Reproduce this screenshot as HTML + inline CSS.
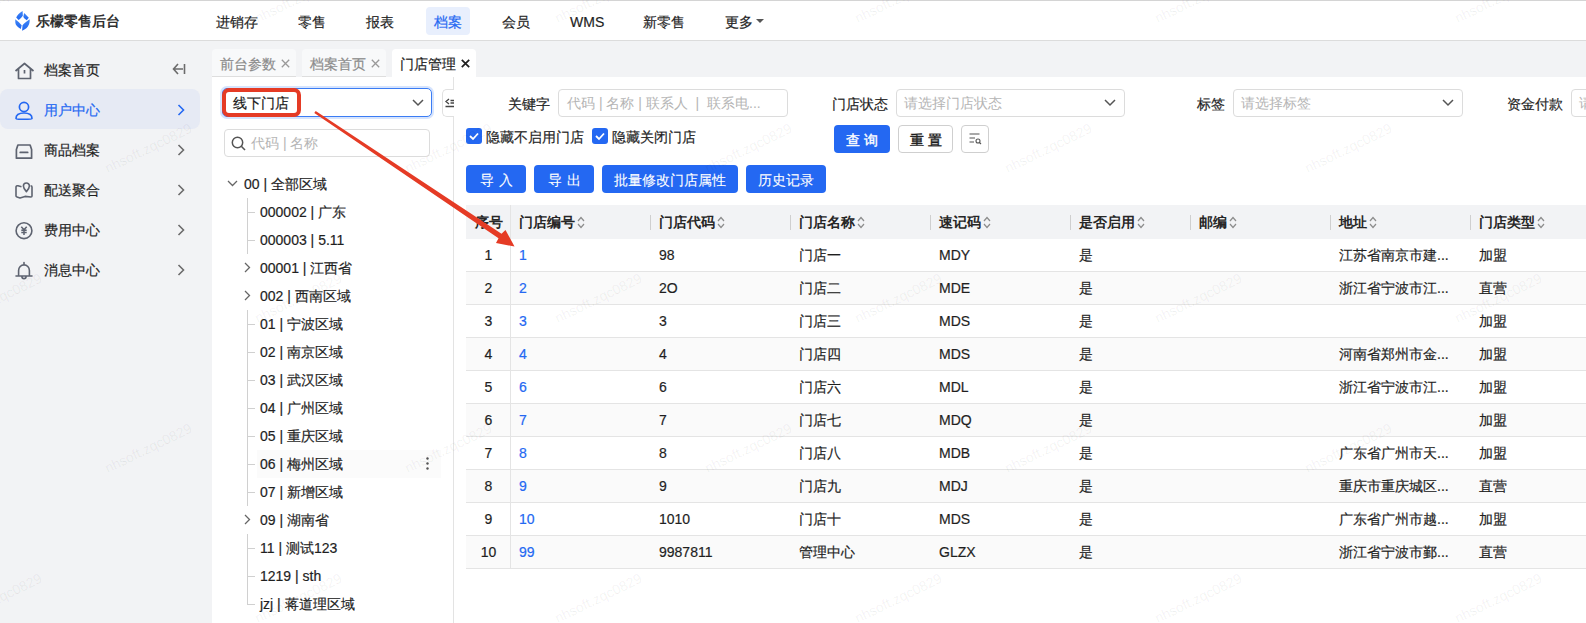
<!DOCTYPE html><html><head><meta charset="utf-8"><style>
*{margin:0;padding:0;box-sizing:border-box}
html,body{width:1586px;height:623px;overflow:hidden;background:#fff}
body{font-family:"Liberation Sans",sans-serif;font-size:14px;color:#1f1f1f;position:relative}
.t{-webkit-text-stroke:0.2px currentColor}
div,span{position:absolute;white-space:nowrap}
svg{position:absolute;overflow:visible}
.t{line-height:20px;font-size:14px}
.nav{top:12px;color:#1f1f1f}
.si{left:44px;color:#1f1f1f}
.tab{top:49px;height:28px;color:#8c8c8c;background:#f8f9fa;border-radius:4px 4px 0 0;border-bottom:1px solid #dedede}
.tab span{top:4px;left:8px}
.inp{border:1px solid #dcdcdc;border-radius:4px;height:28px;background:#fff}
.ph{color:#b5b5b5;-webkit-text-stroke:0 !important}
.btn{height:28px;line-height:30px;border-radius:4px;background:#2468f2;color:#fff;text-align:center;font-size:14px;-webkit-text-stroke:0.1px currentColor}
.th{top:205px;height:34px;background:#f2f3f5}
.tht{top:212px;font-weight:bold;color:#262626;-webkit-text-stroke:0 !important}
.sep{top:215px;width:1px;height:15px;background:#cfcfcf}
.row{left:466px;width:1120px;height:33px;border-bottom:1px solid #e4e4e4}
.lk{color:#2468f2}
</style></head><body>
<div style="left:0;top:0;width:1586px;height:41px;background:#fff;border-bottom:1px solid #dcdcdc"></div>
<div style="left:0;top:0;width:1586px;height:1px;background:#d4d4d4"></div>
<svg style="left:15px;top:11px" width="16" height="20" viewBox="0 0 16 20">
<defs><linearGradient id="lg" x1="0" y1="0" x2="0" y2="1"><stop offset="0" stop-color="#3f86f7"/><stop offset="1" stop-color="#1f66f0"/></linearGradient></defs>
<path d="M7.6 0 C4.5 2 2.2 4 1.2 6.5 L3.6 9 C5.5 7.5 7 6.2 7.8 4.5 Z" fill="url(#lg)"/>
<path d="M9.2 2.1 L13.8 6.7 L11.7 9.2 C10 8 8.6 7 8.3 5.8 Z" fill="url(#lg)"/>
<path d="M0.2 8.3 C2.5 10 4.8 12 6.7 14.2 L5.8 18 C2.5 16 0.5 14 0.4 12.1 Z" fill="url(#lg)"/>
<path d="M14.6 8.3 C12 10.5 9 12.2 7.5 14.2 L7.1 19.8 C10.5 18 13 16.5 13.4 14.6 C14.6 12.5 14.8 10 14.6 8.3 Z" fill="url(#lg)"/>
</svg>
<div class="t" style="left:36px;top:11px;font-weight:bold;color:#303030;font-size:14px;-webkit-text-stroke:0">乐檬零售后台</div>
<div style="left:426px;top:7px;width:44px;height:28px;border-radius:4px;background:#e8effd"></div>
<div class="t nav" style="left:216px;color:#1f1f1f">进销存</div>
<div class="t nav" style="left:298px;color:#1f1f1f">零售</div>
<div class="t nav" style="left:366px;color:#1f1f1f">报表</div>
<div class="t nav" style="left:434px;color:#2468f2">档案</div>
<div class="t nav" style="left:502px;color:#1f1f1f">会员</div>
<div class="t nav" style="left:570px;color:#1f1f1f">WMS</div>
<div class="t nav" style="left:643px;color:#1f1f1f">新零售</div>
<div class="t nav" style="left:725px;color:#1f1f1f">更多</div>
<svg style="left:756px;top:19px" width="8" height="4"><path d="M0 0 L8 0 L4 4 Z" fill="#555"/></svg>
<div style="left:0;top:41px;width:212px;height:582px;background:#f2f3f5"></div>
<div style="left:0;top:89px;width:200px;height:40px;background:#e6eaf4;border-radius:8px"></div>
<div class="t si" style="top:60px;color:#1f1f1f">档案首页</div>
<div class="t si" style="top:100px;color:#2468f2">用户中心</div>
<svg style="left:177px;top:104px" width="8" height="12"><path d="M1.5 1 L6.5 6 L1.5 11" fill="none" stroke="#2468f2" stroke-width="1.6"/></svg>
<div class="t si" style="top:140px;color:#1f1f1f">商品档案</div>
<svg style="left:177px;top:144px" width="8" height="12"><path d="M1.5 1 L6.5 6 L1.5 11" fill="none" stroke="#6b6b6b" stroke-width="1.6"/></svg>
<div class="t si" style="top:180px;color:#1f1f1f">配送聚合</div>
<svg style="left:177px;top:184px" width="8" height="12"><path d="M1.5 1 L6.5 6 L1.5 11" fill="none" stroke="#6b6b6b" stroke-width="1.6"/></svg>
<div class="t si" style="top:220px;color:#1f1f1f">费用中心</div>
<svg style="left:177px;top:224px" width="8" height="12"><path d="M1.5 1 L6.5 6 L1.5 11" fill="none" stroke="#6b6b6b" stroke-width="1.6"/></svg>
<div class="t si" style="top:260px;color:#1f1f1f">消息中心</div>
<svg style="left:177px;top:264px" width="8" height="12"><path d="M1.5 1 L6.5 6 L1.5 11" fill="none" stroke="#6b6b6b" stroke-width="1.6"/></svg>
<svg style="left:172px;top:63px" width="14" height="12"><path d="M6 1 L1.5 6 L6 11 M1.5 6 L11 6 M12.5 1 L12.5 11" fill="none" stroke="#6b6b6b" stroke-width="1.6"/></svg>
<svg style="left:14px;top:62px" width="21" height="18"><path d="M1.5 9 L10.5 1.5 L19.5 9 M4.5 7 L4.5 16.5 L16.5 16.5 L16.5 7 M10.5 8 L10.5 11.5" fill="none" stroke="#5e6370" stroke-width="1.7" stroke-linejoin="round"/></svg>
<svg style="left:14px;top:101px" width="20" height="19"><circle cx="10" cy="6" r="4.6" fill="none" stroke="#2468f2" stroke-width="1.7"/><path d="M2 17.5 C2 13 6 12 10 12 C14 12 18 13 18 17.5 C18 18.5 2 18.5 2 17.5 Z" fill="none" stroke="#2468f2" stroke-width="1.7"/></svg>
<svg style="left:15px;top:143px" width="18" height="17"><path d="M1.4 15.2 L1.4 6.5 L2.9 2 L15.1 2 L16.6 6.5 L16.6 15.2 Z M5.2 9.4 L12.7 9.4" fill="none" stroke="#5e6370" stroke-width="1.7" stroke-linejoin="round" stroke-linecap="round"/></svg>
<svg style="left:15px;top:181px" width="19" height="19"><path d="M6.5 5.7 L3 4.8 C1.8 4.6 1 5 1 6 L1 15 C1 15.5 1.3 15.8 2 16 L5 16.9 L10 15.4 L16 16 C16.6 16 17 15.6 17 15 L17 6 C17 5.2 16.6 4.9 15.6 4.8" fill="none" stroke="#5e6370" stroke-width="1.6" stroke-linejoin="round"/><path d="M11.4 10.6 C9.6 8.6 8.4 7.2 8.4 5 A3 3 0 0 1 14.4 5 C14.4 7.2 13.2 8.6 11.4 10.6 Z" fill="none" stroke="#5e6370" stroke-width="1.6" stroke-linejoin="round"/></svg>
<svg style="left:15px;top:221px" width="18" height="19"><circle cx="9" cy="9.7" r="7.9" fill="none" stroke="#5e6370" stroke-width="1.6"/><path d="M6.3 5.8 L9 8.8 L11.7 5.8 M9 8.8 L9 14 M6.3 9.3 L11.7 9.3 M6.3 11.4 L11.7 11.4" fill="none" stroke="#5e6370" stroke-width="1.5"/></svg>
<svg style="left:15px;top:261px" width="19" height="20"><path d="M3.6 15 L3.6 9.5 A5.4 5.6 0 0 1 14.4 9.5 L14.4 15 M1 15 L17 15 M6.9 15.5 A2.1 2.1 0 0 0 11.1 15.5 M9 1.5 L9 3.8" fill="none" stroke="#5e6370" stroke-width="1.6" stroke-linejoin="round" stroke-linecap="round"/></svg>
<div style="left:212px;top:41px;width:1374px;height:36px;background:#f2f3f5"></div>
<div style="left:212px;top:77px;width:1374px;height:546px;background:#fff"></div>
<div class="tab" style="left:212px;width:84px"><span class="t" style="top:5px">前台参数</span></div>
<svg style="left:281px;top:59px" width="9" height="9"><path d="M0.8 0.8 L8.2 8.2 M8.2 0.8 L0.8 8.2" stroke="#999" stroke-width="1.3"/></svg>
<div class="tab" style="left:302px;width:84px"><span class="t" style="top:5px">档案首页</span></div>
<svg style="left:371px;top:59px" width="9" height="9"><path d="M0.8 0.8 L8.2 8.2 M8.2 0.8 L0.8 8.2" stroke="#999" stroke-width="1.3"/></svg>
<div style="left:392px;top:49px;width:84px;height:28px;background:#fff;border-radius:4px 4px 0 0"><span class="t" style="left:8px;top:5px;color:#1f1f1f">门店管理</span></div>
<svg style="left:461px;top:59px" width="9" height="9"><path d="M0.8 0.8 L8.2 8.2 M8.2 0.8 L0.8 8.2" stroke="#1f1f1f" stroke-width="1.7"/></svg>
<div style="left:453px;top:77px;width:1px;height:546px;background:#e3e3e3"></div>
<div style="left:222px;top:88px;width:210px;height:29px;border:1px solid #3b7cf4;border-radius:5px;box-shadow:0 0 0 2px #d6e4fd;background:#fff"></div>
<svg style="left:412px;top:99px" width="12" height="7"><path d="M1 1 L6 6 L11 1" fill="none" stroke="#555" stroke-width="1.5"/></svg>
<div class="t" style="left:233px;top:93px;color:#1a1a1a">线下门店</div>
<div style="left:222px;top:88px;width:79px;height:29px;border:4px solid #e53b25;border-radius:7px"></div>
<div style="left:442px;top:89px;width:12px;height:28px;border:1px solid #e0e0e0;border-right:none;border-radius:5px 0 0 5px;background:#fff"></div>
<svg style="left:445px;top:98px" width="9" height="10"><path d="M4 1 L1 3.5 L4 6 M5.5 2.5 L9 2.5 M5.5 5 L9 5 M0.5 8.5 L9 8.5" fill="none" stroke="#444" stroke-width="1.3"/></svg>
<div class="inp" style="left:224px;top:129px;width:206px;height:28px"></div>
<svg style="left:231px;top:136px" width="15" height="15"><circle cx="6.5" cy="6.5" r="5.2" fill="none" stroke="#555" stroke-width="1.5"/><path d="M10.3 10.3 L14 14" stroke="#555" stroke-width="1.6"/></svg>
<div class="t ph" style="left:251px;top:133px">代码 | 名称</div>
<div style="left:257px;top:450px;width:184px;height:28px;background:#fbfbfb"></div>
<div class="t" style="left:244px;top:174px;color:#1f1f1f">00 | 全部区域</div>
<svg style="left:227px;top:180px" width="11" height="7"><path d="M1 1 L5.5 5.5 L10 1" fill="none" stroke="#666" stroke-width="1.3"/></svg>
<div class="t" style="left:260px;top:202px;color:#1f1f1f">000002 | 广东</div>
<div style="left:247px;top:212px;width:8px;height:1px;background:#d0d0d0"></div>
<div class="t" style="left:260px;top:230px;color:#1f1f1f">000003 | 5.11</div>
<div style="left:247px;top:240px;width:8px;height:1px;background:#d0d0d0"></div>
<div class="t" style="left:260px;top:258px;color:#1f1f1f">00001 | 江西省</div>
<svg style="left:244px;top:262px" width="7" height="11"><path d="M1 1 L5.5 5.5 L1 10" fill="none" stroke="#666" stroke-width="1.3"/></svg>
<div class="t" style="left:260px;top:286px;color:#1f1f1f">002 | 西南区域</div>
<svg style="left:244px;top:290px" width="7" height="11"><path d="M1 1 L5.5 5.5 L1 10" fill="none" stroke="#666" stroke-width="1.3"/></svg>
<div class="t" style="left:260px;top:314px;color:#1f1f1f">01 | 宁波区域</div>
<div style="left:247px;top:324px;width:8px;height:1px;background:#d0d0d0"></div>
<div class="t" style="left:260px;top:342px;color:#1f1f1f">02 | 南京区域</div>
<div style="left:247px;top:352px;width:8px;height:1px;background:#d0d0d0"></div>
<div class="t" style="left:260px;top:370px;color:#1f1f1f">03 | 武汉区域</div>
<div style="left:247px;top:380px;width:8px;height:1px;background:#d0d0d0"></div>
<div class="t" style="left:260px;top:398px;color:#1f1f1f">04 | 广州区域</div>
<div style="left:247px;top:408px;width:8px;height:1px;background:#d0d0d0"></div>
<div class="t" style="left:260px;top:426px;color:#1f1f1f">05 | 重庆区域</div>
<div style="left:247px;top:436px;width:8px;height:1px;background:#d0d0d0"></div>
<div class="t" style="left:260px;top:454px;color:#1f1f1f">06 | 梅州区域</div>
<div style="left:247px;top:464px;width:8px;height:1px;background:#d0d0d0"></div>
<div class="t" style="left:260px;top:482px;color:#1f1f1f">07 | 新增区域</div>
<div style="left:247px;top:492px;width:8px;height:1px;background:#d0d0d0"></div>
<div class="t" style="left:260px;top:510px;color:#1f1f1f">09 | 湖南省</div>
<svg style="left:244px;top:514px" width="7" height="11"><path d="M1 1 L5.5 5.5 L1 10" fill="none" stroke="#666" stroke-width="1.3"/></svg>
<div class="t" style="left:260px;top:538px;color:#1f1f1f">11 | 测试123</div>
<div style="left:247px;top:548px;width:8px;height:1px;background:#d0d0d0"></div>
<div class="t" style="left:260px;top:566px;color:#1f1f1f">1219 | sth</div>
<div style="left:247px;top:576px;width:8px;height:1px;background:#d0d0d0"></div>
<div class="t" style="left:260px;top:594px;color:#1f1f1f">jzj | 蒋道理区域</div>
<div style="left:247px;top:604px;width:8px;height:1px;background:#d0d0d0"></div>
<div style="left:247px;top:198px;width:1px;height:56px;background:#d0d0d0"></div>
<div style="left:247px;top:310px;width:1px;height:196px;background:#d0d0d0"></div>
<div style="left:247px;top:534px;width:1px;height:70px;background:#d0d0d0"></div>
<svg style="left:426px;top:457px" width="3" height="13"><circle cx="1.5" cy="1.5" r="1.2" fill="#555"/><circle cx="1.5" cy="6.5" r="1.2" fill="#555"/><circle cx="1.5" cy="11.5" r="1.2" fill="#555"/></svg>
<div class="t" style="left:508px;top:94px">关键字</div>
<div class="inp" style="left:558px;top:89px;width:230px;height:28px"></div>
<div class="t ph" style="left:567px;top:93px">代码 | 名称 | 联系人 &nbsp;| &nbsp;联系电...</div>
<div class="t" style="left:832px;top:94px">门店状态</div>
<div class="inp" style="left:896px;top:89px;width:229px;height:28px"></div>
<div class="t ph" style="left:904px;top:93px">请选择门店状态</div>
<svg style="left:1104px;top:99px" width="12" height="7"><path d="M1 1 L6 6 L11 1" fill="none" stroke="#555" stroke-width="1.5"/></svg>
<div class="t" style="left:1197px;top:94px">标签</div>
<div class="inp" style="left:1233px;top:89px;width:230px;height:28px"></div>
<div class="t ph" style="left:1241px;top:93px">请选择标签</div>
<svg style="left:1442px;top:99px" width="12" height="7"><path d="M1 1 L6 6 L11 1" fill="none" stroke="#555" stroke-width="1.5"/></svg>
<div class="t" style="left:1507px;top:94px">资金付款</div>
<div class="inp" style="left:1571px;top:89px;width:40px;height:28px"></div>
<div class="t ph" style="left:1579px;top:93px">请</div>
<div style="left:466px;top:128px;width:16px;height:16px;background:#2468f2;border-radius:3px"></div>
<svg style="left:469px;top:132px" width="10" height="8"><path d="M1 4 L4 7 L9 1.5" fill="none" stroke="#fff" stroke-width="1.8"/></svg>
<div class="t" style="left:486px;top:127px">隐藏不启用门店</div>
<div style="left:592px;top:128px;width:16px;height:16px;background:#2468f2;border-radius:3px"></div>
<svg style="left:595px;top:132px" width="10" height="8"><path d="M1 4 L4 7 L9 1.5" fill="none" stroke="#fff" stroke-width="1.8"/></svg>
<div class="t" style="left:612px;top:127px">隐藏关闭门店</div>
<div class="btn" style="left:834px;top:125px;width:56px;letter-spacing:4px;text-indent:4px;-webkit-text-stroke:0.4px #fff">查询</div>
<div class="btn" style="left:898px;top:125px;width:55px;background:#fff;border:1px solid #cfcfcf;color:#1a1a1a;line-height:28px;letter-spacing:4px;text-indent:4px;-webkit-text-stroke:0.4px #1a1a1a">重置</div>
<div class="btn" style="left:961px;top:125px;width:28px;background:#fff;border:1px solid #cfcfcf"></div>
<svg style="left:969px;top:133px" width="13" height="11"><path d="M0.5 1 L10.5 1 M0.5 5 L6 5 M0.5 9 L5 9" stroke="#555" stroke-width="1.1"/><circle cx="9" cy="8" r="2" fill="none" stroke="#555" stroke-width="1.1"/><path d="M10.5 9.5 L12 11" stroke="#555" stroke-width="1.1"/></svg>
<div class="btn" style="left:466px;top:165px;width:60px;letter-spacing:5px;text-indent:5px">导入</div>
<div class="btn" style="left:534px;top:165px;width:60px;letter-spacing:5px;text-indent:5px">导出</div>
<div class="btn" style="left:602px;top:165px;width:136px;letter-spacing:0px;text-indent:0px">批量修改门店属性</div>
<div class="btn" style="left:746px;top:165px;width:80px;letter-spacing:0px;text-indent:0px">历史记录</div>
<div class="th" style="left:466px;width:1120px"></div>
<div class="t tht" style="left:474px;width:30px;text-align:center">序号</div>
<div class="t tht" style="left:519px">门店编号<svg style="position:relative;display:inline-block;vertical-align:middle;margin-left:2px;top:-1px" width="8" height="13"><path d="M1 5 L4 1.5 L7 5 M1 8 L4 11.5 L7 8" fill="none" stroke="#8c8c8c" stroke-width="1.2"/></svg></div>
<div class="sep" style="left:650px"></div>
<div class="t tht" style="left:659px">门店代码<svg style="position:relative;display:inline-block;vertical-align:middle;margin-left:2px;top:-1px" width="8" height="13"><path d="M1 5 L4 1.5 L7 5 M1 8 L4 11.5 L7 8" fill="none" stroke="#8c8c8c" stroke-width="1.2"/></svg></div>
<div class="sep" style="left:790px"></div>
<div class="t tht" style="left:799px">门店名称<svg style="position:relative;display:inline-block;vertical-align:middle;margin-left:2px;top:-1px" width="8" height="13"><path d="M1 5 L4 1.5 L7 5 M1 8 L4 11.5 L7 8" fill="none" stroke="#8c8c8c" stroke-width="1.2"/></svg></div>
<div class="sep" style="left:930px"></div>
<div class="t tht" style="left:939px">速记码<svg style="position:relative;display:inline-block;vertical-align:middle;margin-left:2px;top:-1px" width="8" height="13"><path d="M1 5 L4 1.5 L7 5 M1 8 L4 11.5 L7 8" fill="none" stroke="#8c8c8c" stroke-width="1.2"/></svg></div>
<div class="sep" style="left:1070px"></div>
<div class="t tht" style="left:1079px">是否启用<svg style="position:relative;display:inline-block;vertical-align:middle;margin-left:2px;top:-1px" width="8" height="13"><path d="M1 5 L4 1.5 L7 5 M1 8 L4 11.5 L7 8" fill="none" stroke="#8c8c8c" stroke-width="1.2"/></svg></div>
<div class="sep" style="left:1190px"></div>
<div class="t tht" style="left:1199px">邮编<svg style="position:relative;display:inline-block;vertical-align:middle;margin-left:2px;top:-1px" width="8" height="13"><path d="M1 5 L4 1.5 L7 5 M1 8 L4 11.5 L7 8" fill="none" stroke="#8c8c8c" stroke-width="1.2"/></svg></div>
<div class="sep" style="left:1330px"></div>
<div class="t tht" style="left:1339px">地址<svg style="position:relative;display:inline-block;vertical-align:middle;margin-left:2px;top:-1px" width="8" height="13"><path d="M1 5 L4 1.5 L7 5 M1 8 L4 11.5 L7 8" fill="none" stroke="#8c8c8c" stroke-width="1.2"/></svg></div>
<div class="sep" style="left:1470px"></div>
<div class="t tht" style="left:1479px">门店类型<svg style="position:relative;display:inline-block;vertical-align:middle;margin-left:2px;top:-1px" width="8" height="13"><path d="M1 5 L4 1.5 L7 5 M1 8 L4 11.5 L7 8" fill="none" stroke="#8c8c8c" stroke-width="1.2"/></svg></div>
<div class="row" style="top:239px;background:#fff"></div>
<div class="t" style="left:466px;top:245px;width:45px;text-align:center">1</div>
<div class="t lk" style="left:519px;top:245px">1</div>
<div class="t" style="left:659px;top:245px">98</div>
<div class="t" style="left:799px;top:245px">门店一</div>
<div class="t" style="left:939px;top:245px">MDY</div>
<div class="t" style="left:1079px;top:245px">是</div>
<div class="t" style="left:1339px;top:245px">江苏省南京市建...</div>
<div class="t" style="left:1479px;top:245px">加盟</div>
<div class="row" style="top:272px;background:#fafafa"></div>
<div class="t" style="left:466px;top:278px;width:45px;text-align:center">2</div>
<div class="t lk" style="left:519px;top:278px">2</div>
<div class="t" style="left:659px;top:278px">2O</div>
<div class="t" style="left:799px;top:278px">门店二</div>
<div class="t" style="left:939px;top:278px">MDE</div>
<div class="t" style="left:1079px;top:278px">是</div>
<div class="t" style="left:1339px;top:278px">浙江省宁波市江...</div>
<div class="t" style="left:1479px;top:278px">直营</div>
<div class="row" style="top:305px;background:#fff"></div>
<div class="t" style="left:466px;top:311px;width:45px;text-align:center">3</div>
<div class="t lk" style="left:519px;top:311px">3</div>
<div class="t" style="left:659px;top:311px">3</div>
<div class="t" style="left:799px;top:311px">门店三</div>
<div class="t" style="left:939px;top:311px">MDS</div>
<div class="t" style="left:1079px;top:311px">是</div>
<div class="t" style="left:1339px;top:311px"></div>
<div class="t" style="left:1479px;top:311px">加盟</div>
<div class="row" style="top:338px;background:#fafafa"></div>
<div class="t" style="left:466px;top:344px;width:45px;text-align:center">4</div>
<div class="t lk" style="left:519px;top:344px">4</div>
<div class="t" style="left:659px;top:344px">4</div>
<div class="t" style="left:799px;top:344px">门店四</div>
<div class="t" style="left:939px;top:344px">MDS</div>
<div class="t" style="left:1079px;top:344px">是</div>
<div class="t" style="left:1339px;top:344px">河南省郑州市金...</div>
<div class="t" style="left:1479px;top:344px">加盟</div>
<div class="row" style="top:371px;background:#fff"></div>
<div class="t" style="left:466px;top:377px;width:45px;text-align:center">5</div>
<div class="t lk" style="left:519px;top:377px">6</div>
<div class="t" style="left:659px;top:377px">6</div>
<div class="t" style="left:799px;top:377px">门店六</div>
<div class="t" style="left:939px;top:377px">MDL</div>
<div class="t" style="left:1079px;top:377px">是</div>
<div class="t" style="left:1339px;top:377px">浙江省宁波市江...</div>
<div class="t" style="left:1479px;top:377px">加盟</div>
<div class="row" style="top:404px;background:#fafafa"></div>
<div class="t" style="left:466px;top:410px;width:45px;text-align:center">6</div>
<div class="t lk" style="left:519px;top:410px">7</div>
<div class="t" style="left:659px;top:410px">7</div>
<div class="t" style="left:799px;top:410px">门店七</div>
<div class="t" style="left:939px;top:410px">MDQ</div>
<div class="t" style="left:1079px;top:410px">是</div>
<div class="t" style="left:1339px;top:410px"></div>
<div class="t" style="left:1479px;top:410px">加盟</div>
<div class="row" style="top:437px;background:#fff"></div>
<div class="t" style="left:466px;top:443px;width:45px;text-align:center">7</div>
<div class="t lk" style="left:519px;top:443px">8</div>
<div class="t" style="left:659px;top:443px">8</div>
<div class="t" style="left:799px;top:443px">门店八</div>
<div class="t" style="left:939px;top:443px">MDB</div>
<div class="t" style="left:1079px;top:443px">是</div>
<div class="t" style="left:1339px;top:443px">广东省广州市天...</div>
<div class="t" style="left:1479px;top:443px">加盟</div>
<div class="row" style="top:470px;background:#fafafa"></div>
<div class="t" style="left:466px;top:476px;width:45px;text-align:center">8</div>
<div class="t lk" style="left:519px;top:476px">9</div>
<div class="t" style="left:659px;top:476px">9</div>
<div class="t" style="left:799px;top:476px">门店九</div>
<div class="t" style="left:939px;top:476px">MDJ</div>
<div class="t" style="left:1079px;top:476px">是</div>
<div class="t" style="left:1339px;top:476px">重庆市重庆城区...</div>
<div class="t" style="left:1479px;top:476px">直营</div>
<div class="row" style="top:503px;background:#fff"></div>
<div class="t" style="left:466px;top:509px;width:45px;text-align:center">9</div>
<div class="t lk" style="left:519px;top:509px">10</div>
<div class="t" style="left:659px;top:509px">1010</div>
<div class="t" style="left:799px;top:509px">门店十</div>
<div class="t" style="left:939px;top:509px">MDS</div>
<div class="t" style="left:1079px;top:509px">是</div>
<div class="t" style="left:1339px;top:509px">广东省广州市越...</div>
<div class="t" style="left:1479px;top:509px">加盟</div>
<div class="row" style="top:536px;background:#fafafa"></div>
<div class="t" style="left:466px;top:542px;width:45px;text-align:center">10</div>
<div class="t lk" style="left:519px;top:542px">99</div>
<div class="t" style="left:659px;top:542px">9987811</div>
<div class="t" style="left:799px;top:542px">管理中心</div>
<div class="t" style="left:939px;top:542px">GLZX</div>
<div class="t" style="left:1079px;top:542px">是</div>
<div class="t" style="left:1339px;top:542px">浙江省宁波市鄞...</div>
<div class="t" style="left:1479px;top:542px">直营</div>
<div style="left:510px;top:205px;width:1px;height:364px;background:#e4e4e4"></div>
<svg style="left:0;top:0" width="1586" height="623"><path d="M315.7 111 L501.5 233.7 L505.5 230 L514.5 246.5 L496 243 L498.5 238.3 L314.3 113 Z" fill="#e53b25"/></svg>
<div style="left:-41px;top:10px;height:16px;line-height:16px;font-size:14px;color:rgba(0,0,0,0.06);transform-origin:0 100%;transform:rotate(-26deg)">nhsoft.zqc0829</div>
<div style="left:259px;top:10px;height:16px;line-height:16px;font-size:14px;color:rgba(0,0,0,0.06);transform-origin:0 100%;transform:rotate(-26deg)">nhsoft.zqc0829</div>
<div style="left:559px;top:10px;height:16px;line-height:16px;font-size:14px;color:rgba(0,0,0,0.06);transform-origin:0 100%;transform:rotate(-26deg)">nhsoft.zqc0829</div>
<div style="left:859px;top:10px;height:16px;line-height:16px;font-size:14px;color:rgba(0,0,0,0.06);transform-origin:0 100%;transform:rotate(-26deg)">nhsoft.zqc0829</div>
<div style="left:1159px;top:10px;height:16px;line-height:16px;font-size:14px;color:rgba(0,0,0,0.06);transform-origin:0 100%;transform:rotate(-26deg)">nhsoft.zqc0829</div>
<div style="left:1459px;top:10px;height:16px;line-height:16px;font-size:14px;color:rgba(0,0,0,0.06);transform-origin:0 100%;transform:rotate(-26deg)">nhsoft.zqc0829</div>
<div style="left:109px;top:160px;height:16px;line-height:16px;font-size:14px;color:rgba(0,0,0,0.06);transform-origin:0 100%;transform:rotate(-26deg)">nhsoft.zqc0829</div>
<div style="left:409px;top:160px;height:16px;line-height:16px;font-size:14px;color:rgba(0,0,0,0.06);transform-origin:0 100%;transform:rotate(-26deg)">nhsoft.zqc0829</div>
<div style="left:709px;top:160px;height:16px;line-height:16px;font-size:14px;color:rgba(0,0,0,0.06);transform-origin:0 100%;transform:rotate(-26deg)">nhsoft.zqc0829</div>
<div style="left:1009px;top:160px;height:16px;line-height:16px;font-size:14px;color:rgba(0,0,0,0.06);transform-origin:0 100%;transform:rotate(-26deg)">nhsoft.zqc0829</div>
<div style="left:1309px;top:160px;height:16px;line-height:16px;font-size:14px;color:rgba(0,0,0,0.06);transform-origin:0 100%;transform:rotate(-26deg)">nhsoft.zqc0829</div>
<div style="left:-41px;top:310px;height:16px;line-height:16px;font-size:14px;color:rgba(0,0,0,0.06);transform-origin:0 100%;transform:rotate(-26deg)">nhsoft.zqc0829</div>
<div style="left:259px;top:310px;height:16px;line-height:16px;font-size:14px;color:rgba(0,0,0,0.06);transform-origin:0 100%;transform:rotate(-26deg)">nhsoft.zqc0829</div>
<div style="left:559px;top:310px;height:16px;line-height:16px;font-size:14px;color:rgba(0,0,0,0.06);transform-origin:0 100%;transform:rotate(-26deg)">nhsoft.zqc0829</div>
<div style="left:859px;top:310px;height:16px;line-height:16px;font-size:14px;color:rgba(0,0,0,0.06);transform-origin:0 100%;transform:rotate(-26deg)">nhsoft.zqc0829</div>
<div style="left:1159px;top:310px;height:16px;line-height:16px;font-size:14px;color:rgba(0,0,0,0.06);transform-origin:0 100%;transform:rotate(-26deg)">nhsoft.zqc0829</div>
<div style="left:1459px;top:310px;height:16px;line-height:16px;font-size:14px;color:rgba(0,0,0,0.06);transform-origin:0 100%;transform:rotate(-26deg)">nhsoft.zqc0829</div>
<div style="left:109px;top:460px;height:16px;line-height:16px;font-size:14px;color:rgba(0,0,0,0.06);transform-origin:0 100%;transform:rotate(-26deg)">nhsoft.zqc0829</div>
<div style="left:409px;top:460px;height:16px;line-height:16px;font-size:14px;color:rgba(0,0,0,0.06);transform-origin:0 100%;transform:rotate(-26deg)">nhsoft.zqc0829</div>
<div style="left:709px;top:460px;height:16px;line-height:16px;font-size:14px;color:rgba(0,0,0,0.06);transform-origin:0 100%;transform:rotate(-26deg)">nhsoft.zqc0829</div>
<div style="left:1009px;top:460px;height:16px;line-height:16px;font-size:14px;color:rgba(0,0,0,0.06);transform-origin:0 100%;transform:rotate(-26deg)">nhsoft.zqc0829</div>
<div style="left:1309px;top:460px;height:16px;line-height:16px;font-size:14px;color:rgba(0,0,0,0.06);transform-origin:0 100%;transform:rotate(-26deg)">nhsoft.zqc0829</div>
<div style="left:-41px;top:610px;height:16px;line-height:16px;font-size:14px;color:rgba(0,0,0,0.06);transform-origin:0 100%;transform:rotate(-26deg)">nhsoft.zqc0829</div>
<div style="left:259px;top:610px;height:16px;line-height:16px;font-size:14px;color:rgba(0,0,0,0.06);transform-origin:0 100%;transform:rotate(-26deg)">nhsoft.zqc0829</div>
<div style="left:559px;top:610px;height:16px;line-height:16px;font-size:14px;color:rgba(0,0,0,0.06);transform-origin:0 100%;transform:rotate(-26deg)">nhsoft.zqc0829</div>
<div style="left:859px;top:610px;height:16px;line-height:16px;font-size:14px;color:rgba(0,0,0,0.06);transform-origin:0 100%;transform:rotate(-26deg)">nhsoft.zqc0829</div>
<div style="left:1159px;top:610px;height:16px;line-height:16px;font-size:14px;color:rgba(0,0,0,0.06);transform-origin:0 100%;transform:rotate(-26deg)">nhsoft.zqc0829</div>
<div style="left:1459px;top:610px;height:16px;line-height:16px;font-size:14px;color:rgba(0,0,0,0.06);transform-origin:0 100%;transform:rotate(-26deg)">nhsoft.zqc0829</div>
</body></html>
